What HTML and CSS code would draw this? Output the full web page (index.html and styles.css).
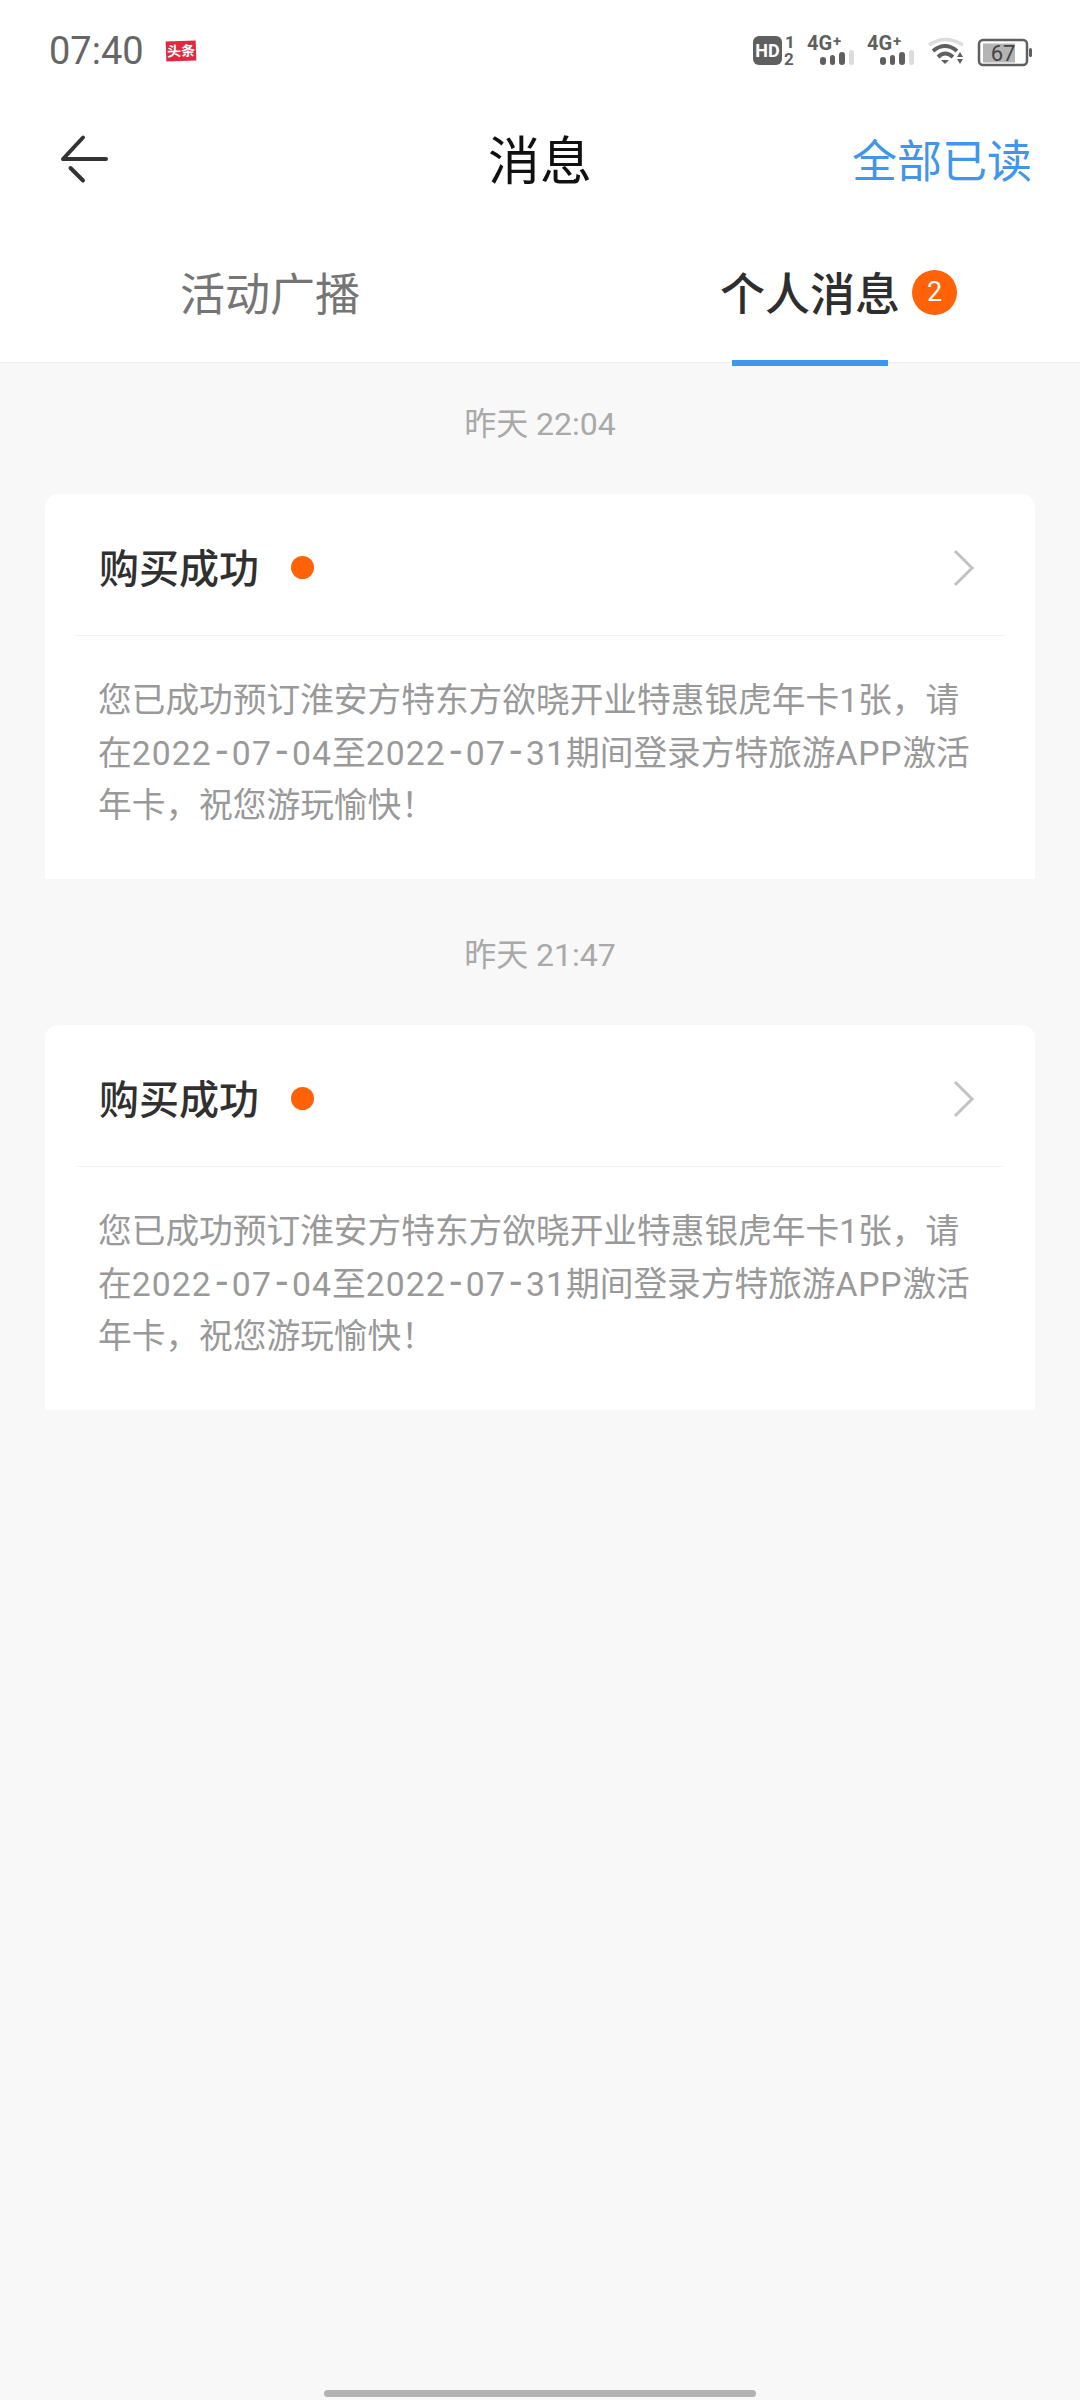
FILE: index.html
```html
<!DOCTYPE html>
<html lang="zh">
<head>
<meta charset="utf-8">
<title>消息</title>
<link rel="stylesheet" href="styles.css">
</head>
<body>
<div class="page">
  <header class="top">
    <div class="status">
      <div class="status-left">
        <span class="clock">07:40</span>
        <span class="news"><span class="news-text">头条</span></span>
      </div>
      <div class="status-right">
        <svg class="ic-hd" width="42" height="30" viewBox="0 0 42 30">
          <rect x="0" y="0" width="29" height="29" rx="6" fill="#5f5f5f"/>
          <text x="14.5" y="21" text-anchor="middle" class="hd-t">HD</text>
          <text x="37" y="12" text-anchor="middle" class="sim-t">1</text>
          <text x="36" y="29" text-anchor="middle" class="sim-t">2</text>
        </svg>
        <svg class="ic-sig" width="47" height="30" viewBox="0 0 47 30">
          <text x="0" y="14" class="g-t">4G</text><text x="26" y="10" class="g-p">+</text>
          <rect x="13" y="21" width="6" height="8" rx="3" fill="#5f5f5f"/>
          <rect x="23" y="19" width="5" height="10" rx="2.500" fill="#5f5f5f"/>
          <rect x="32" y="16" width="6" height="13" rx="3" fill="#5f5f5f"/>
          <rect x="42" y="14" width="5" height="15" rx="2.500" fill="#dcdcdc"/>
        </svg>
        <svg class="ic-sig ic-sig2" width="47" height="30" viewBox="0 0 47 30">
          <text x="0" y="14" class="g-t">4G</text><text x="26" y="10" class="g-p">+</text>
          <rect x="13" y="21" width="6" height="8" rx="3" fill="#5f5f5f"/>
          <rect x="23" y="19" width="5" height="10" rx="2.500" fill="#5f5f5f"/>
          <rect x="32" y="16" width="6" height="13" rx="3" fill="#5f5f5f"/>
          <rect x="42" y="14" width="5" height="15" rx="2.500" fill="#dcdcdc"/>
        </svg>
        <svg class="ic-wifi" width="36" height="28" viewBox="0 0 36 28">
          <path d="M1 8Q17 -3 35 8" fill="none" stroke="#dcdcdc" stroke-width="3.500"/>
          <path d="M5 14Q17 4 29 14" fill="none" stroke="#5f5f5f" stroke-width="4"/>
          <path d="M10 20Q17 13 25 20" fill="none" stroke="#5f5f5f" stroke-width="4"/>
          <path d="M13 23L21 23L17 27Z" fill="#5f5f5f"/>
          <path d="M29 20L35 20L32 15Z M29 22L35 22L32 27Z" fill="#5f5f5f"/>
        </svg>
        <svg class="ic-batt" width="54" height="27" viewBox="0 0 54 27">
          <rect x="1" y="1" width="48" height="25" rx="4" fill="none" stroke="#5f5f5f" stroke-width="2.500"/>
          <rect x="5" y="4.500" width="32" height="19" fill="#b4b4b4"/>
          <rect x="51" y="9" width="3" height="9" rx="1.500" fill="#5f5f5f"/>
          <text x="25" y="22" text-anchor="middle" class="batt-t">67</text>
        </svg>
      </div>
    </div>
    <nav class="nav">
      <svg class="back" width="52" height="50" viewBox="0 0 52 50">
        <path d="M25 2.500L5 24H48M12.500 33L25 45.500" fill="none" stroke="#333" stroke-width="4" stroke-linecap="round" stroke-linejoin="round"/>
      </svg>
      <h1 class="title">消息</h1>
      <span class="read-all">全部已读</span>
    </nav>
    <div class="tabs">
      <div class="tab">活动广播</div>
      <div class="tab tab-on">
        <span class="tab-label">个人消息</span>
        <span class="badge">2</span>
        <span class="bar"></span>
      </div>
    </div>
  </header>

  <main class="list">
    <section class="group">
      <div class="stamp">昨天 22:04</div>
      <article class="card">
        <div class="card-head">
          <span class="card-title">购买成功</span>
          <span class="dot"></span>
          <svg class="chev" width="22" height="38" viewBox="0 0 22 38"><path d="M2 2L19 19L2 36" fill="none" stroke="#c2c2c2" stroke-width="3"/></svg>
        </div>
        <p class="card-body"><span class="line">您已成功预订淮安方特东方欲晓开业特惠银虎年卡1张，请</span><span class="line">在<span class="num">2022<span class="hy">-</span>07<span class="hy">-</span>04</span>至<span class="num">2022<span class="hy">-</span>07<span class="hy">-</span>31</span>期间登录方特旅游<span class="latin">APP</span>激活</span><span class="line">年卡，祝您游玩愉快！</span></p>
      </article>
    </section>
    <section class="group">
      <div class="stamp">昨天 21:47</div>
      <article class="card">
        <div class="card-head">
          <span class="card-title">购买成功</span>
          <span class="dot"></span>
          <svg class="chev" width="22" height="38" viewBox="0 0 22 38"><path d="M2 2L19 19L2 36" fill="none" stroke="#c2c2c2" stroke-width="3"/></svg>
        </div>
        <p class="card-body"><span class="line">您已成功预订淮安方特东方欲晓开业特惠银虎年卡1张，请</span><span class="line">在<span class="num">2022<span class="hy">-</span>07<span class="hy">-</span>04</span>至<span class="num">2022<span class="hy">-</span>07<span class="hy">-</span>31</span>期间登录方特旅游<span class="latin">APP</span>激活</span><span class="line">年卡，祝您游玩愉快！</span></p>
      </article>
    </section>
  </main>
  <div class="home-wrap"><div class="home"></div></div>
</div>
</body>
</html>
```
FILE: styles.css
```css
* { box-sizing: border-box; }
html, body { margin: 0; padding: 0; }
body {
  width: 1080px;
  height: 2400px;
  background: #f8f8f8;
  font-family: Roboto, "Noto Sans CJK SC", sans-serif;
  overflow: hidden;
}
svg { overflow: visible; flex: none; }
.page { width: 1080px; height: 2400px; display: flex; flex-direction: column; }
.top { background: #fff; height: 363px; border-bottom: 1px solid #f0f0f0; }

.status { height: 100px; display: flex; justify-content: space-between; align-items: center; padding: 2px 48px 0 49px; }
.status-left { display: flex; align-items: center; gap: 22px; }
.clock { font-size: 38px; color: #666; }
.news { width: 30px; height: 20px; background: #e0293f; display: flex; align-items: center; justify-content: center; transform: rotate(-2deg); }
.news-text { color: #fff; font-size: 14px; font-weight: 700; line-height: 20px; white-space: nowrap; }
.status-right { display: flex; align-items: center; gap: 12px; }
.ic-sig2 { margin-left: 1px; }
.ic-wifi { margin-left: 2px; }
.ic-batt { margin-left: 2px; margin-top: 2px; }
.hd-t { font: 700 18px Roboto, sans-serif; fill: #fff; }
.sim-t { font: 700 17px Roboto, sans-serif; fill: #5f5f5f; }
.g-t { font: 700 20px Roboto, sans-serif; fill: #5f5f5f; }
.g-p { font: 700 15px Roboto, sans-serif; fill: #5f5f5f; }
.batt-t { font: 400 22px Roboto, sans-serif; fill: #444; }

.nav { height: 120px; position: relative; display: flex; align-items: center; justify-content: space-between; padding: 0 48px 0 58px; }
.title { position: absolute; left: 0; right: 0; margin: 6px 0 0; text-align: center; font-size: 52px; font-weight: 400; color: #111; line-height: 60px; }
.read-all { font-size: 45px; color: #3f96ea; line-height: 60px; margin-top: 6px; }

.tabs { height: 142px; display: flex; }
.tab { width: 540px; text-align: center; font-size: 45px; color: #757575; line-height: 152px; position: relative; }
.tab-on { color: #2e2e2e; font-weight: 500; }
.tab-label { display: inline-block; }
.badge { position: absolute; left: 372px; top: 50px; width: 45px; height: 45px; border-radius: 50%; background: #ff6207; color: #fff; font-size: 27px; font-weight: 400; line-height: 45px; text-align: center; }
.bar { position: absolute; left: 192px; top: 140px; width: 156px; height: 6px; background: #3d96f0; }

.list { flex: 1; padding: 0 45px; }
.group { display: flex; flex-direction: column; }
.stamp { height: 131px; padding-top: 39px; text-align: center; font-size: 32px; line-height: 44px; color: #a9a9a9; }
.card { background: #fff; height: 385px; border-radius: 13px 13px 0 0; padding: 0 30px; }
.group + .group .stamp { height: 146px; padding-top: 54px; }
.card-head { height: 142px; border-bottom: 1px solid #f3f3f3; display: flex; align-items: center; padding: 6px 0 0 24px; }
.card-title { font-size: 40px; font-weight: 500; color: #303030; line-height: 56px; margin-top: 5px; }
.dot { width: 23px; height: 23px; border-radius: 50%; background: #ff6207; margin-left: 32px; }
.chev { margin-left: auto; margin-right: 30px; }
.card-body { margin: 39px 0 0 0; padding: 0 27px 0 23px; font-size: 33.700px; line-height: 52.500px; color: #999; }
.line { display: block; white-space: nowrap; }
.num { letter-spacing: 1.100px; }
.hy { display: inline-block; width: 20px; font-size: 42px; line-height: 40px; text-align: center; letter-spacing: 0; }
.latin { letter-spacing: 0.800px; }
.home-wrap { position: absolute; left: 0; right: 0; top: 2390px; display: flex; justify-content: center; }
.home { width: 432px; height: 7px; border-radius: 4px; background: #b3b3b3; }
```
